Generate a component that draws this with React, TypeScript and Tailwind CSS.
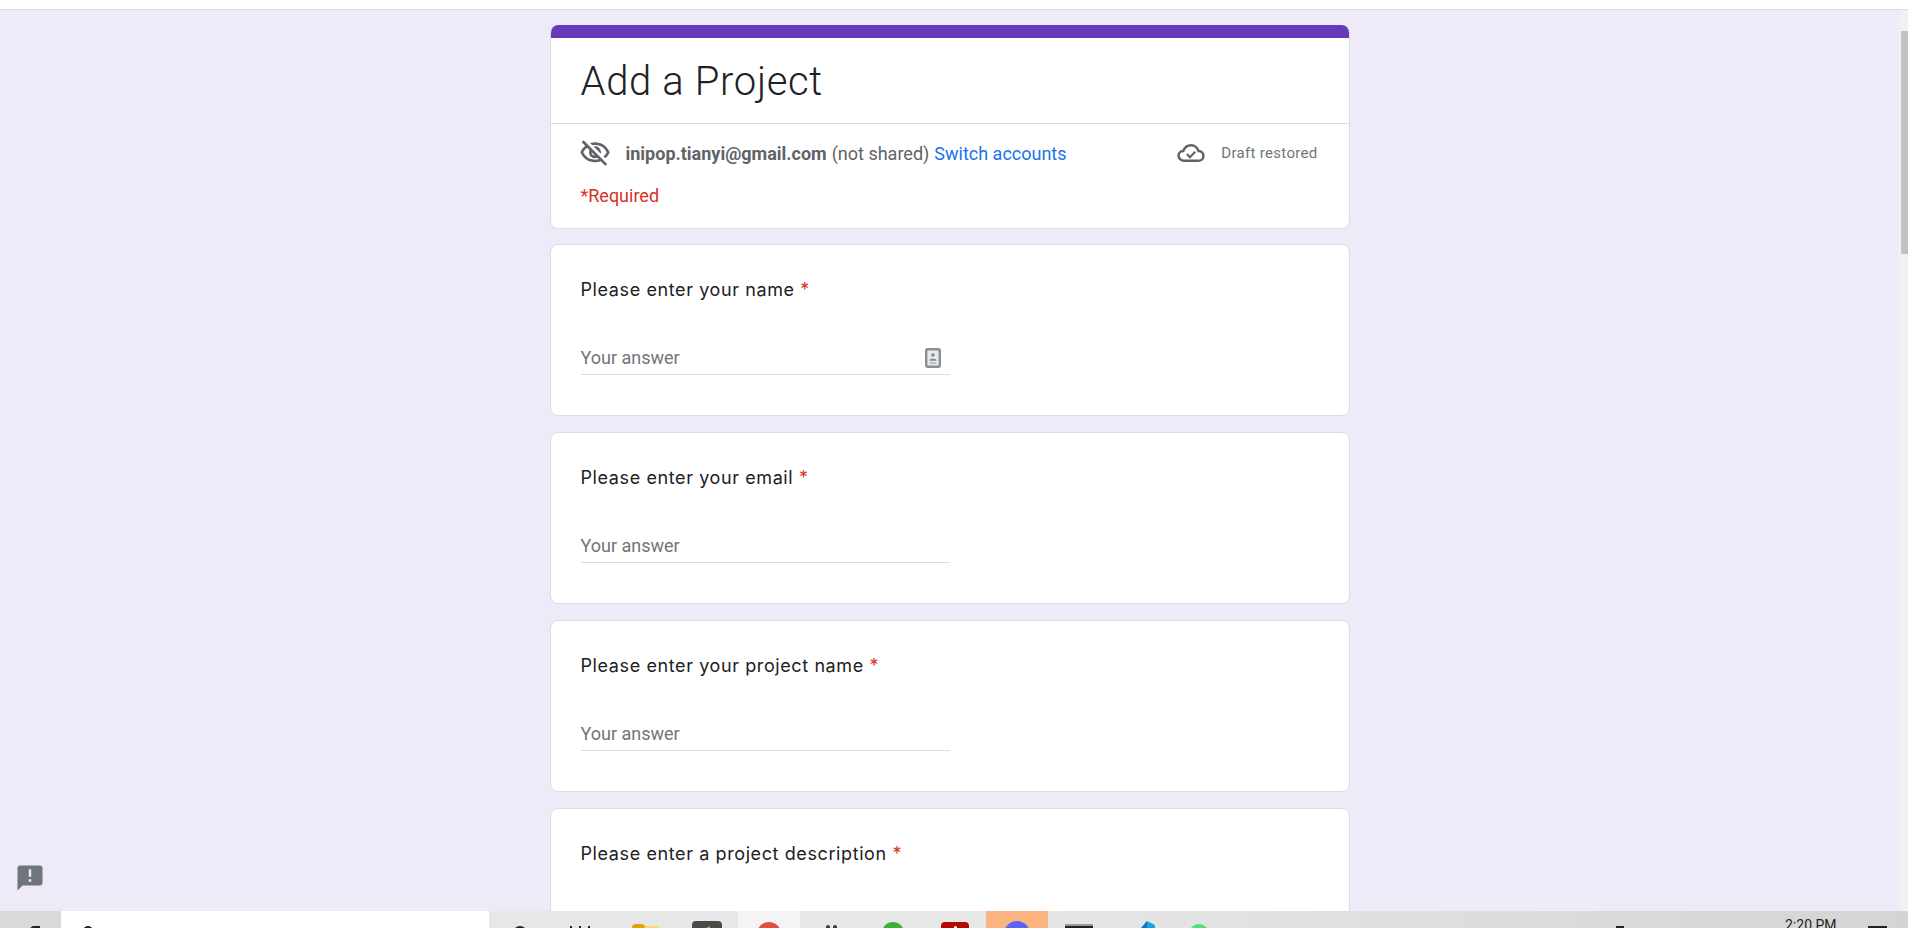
import { MdOutlineVisibilityOff, MdAnnouncement } from "react-icons/md";

function QuestionCard({ label, field = true, contact = false }: { label: string; field?: boolean; contact?: boolean }) {
  return (
    <section className="h-[172px] shrink-0 rounded-lg border border-[#dadce0] bg-white pl-[30px] pt-[33px]">
      <h2 className="font-['Inter',sans-serif] text-[18px] leading-6 tracking-[0.6px] text-[#202124]">
        {label} <span className="text-[#d93025]">*</span>
      </h2>
      {field && (
        <div className="mt-[37px] flex h-[36px] w-[369px] items-center justify-between border-b border-[#dadce0]">
          <span className="mt-[2px] font-['Roboto',sans-serif] text-[18px] text-[#70757a]">Your answer</span>
          {contact && (
            <svg width="16" height="20" viewBox="0 0 16 20" className="mr-[9px] mt-[2px]">
              <rect x="1.2" y="1.2" width="13.6" height="17.6" rx="1.5" fill="#e8eaed" stroke="#8a8e92" strokeWidth="2.4" />
              <circle cx="8" cy="7" r="1.7" fill="#80868b" />
              <path d="M4.5 12.2c0-2 7-2 7 0v.6h-7z" fill="#80868b" />
              <rect x="4.5" y="14" width="7" height="2" fill="#bdc1c6" />
            </svg>
          )}
        </div>
      )}
    </section>
  );
}

function TaskIcon({ children, bg = "" }: { children: React.ReactNode; bg?: string }) {
  return <div className={`flex h-[17px] w-[62px] shrink-0 justify-center overflow-hidden ${bg}`}>{children}</div>;
}

export default function App() {
  return (
    <div className="flex h-[928px] w-[1908px] flex-col overflow-hidden bg-white font-['Roboto',sans-serif]">
      <div className="h-[10px] shrink-0 border-b border-[#dadce0] bg-white" />
      <div className="relative flex min-h-0 flex-1">
        <main className="flex min-w-0 flex-1 flex-col gap-[15px] overflow-hidden bg-[#eeeaf8] pt-[15px]">
          <section className="mx-auto w-[800px] shrink-0 overflow-hidden rounded-lg border border-t-0 border-[#dadce0] bg-white">
            <div className="h-[13px] bg-[#673ab7]" />
            <h1 className="h-[85px] pl-[30px] pt-[20px] font-['Roboto',sans-serif] text-[40px] font-light leading-[48px] tracking-[0.65px] text-[#202124]">
              Add a Project
            </h1>
            <div className="h-[105px] border-t border-[#dadce0] pl-[30px] pr-[31px]">
              <div className="flex h-[58px] items-center text-[18px] text-[#5f6368]">
                <MdOutlineVisibilityOff className="-ml-[2px] text-[32px] text-[#5f6368]" />
                <b className="ml-[15px] font-bold">inipop.tianyi@gmail.com</b>
                <span className="ml-[5px]">(not shared)</span>
                <span className="ml-[5px] text-[#1a73e8]">Switch accounts</span>
                <div className="ml-auto flex items-center">
                  <svg width="28" height="20" viewBox="0 0 27 18" fill="none">
                    <path
                      d="M7 16.5C3.5 16.5 1.5 14 1.5 11.5C1.5 8.5 4 7 6 7C7.5 3.5 10.5 1.5 13.5 1.5C17.5 1.5 20 4.5 20.7 7C23.5 7 25.5 9.3 25.5 11.8C25.5 14.5 23.5 16.5 20.5 16.5Z"
                      stroke="#5f6368"
                      strokeWidth="2.4"
                    />
                    <path d="M9.5 10l3 3 5-5.2" stroke="#5f6368" strokeWidth="2" />
                  </svg>
                  <span className="ml-[16px] text-[15px] tracking-[0.3px] text-[#70757a]">Draft restored</span>
                </div>
              </div>
              <p className="mt-[2px] text-[18px] leading-6 text-[#d93025]">*Required</p>
            </div>
          </section>
          <div className="mx-auto flex w-[800px] flex-col gap-[16px]">
            <QuestionCard label="Please enter your name" contact />
            <QuestionCard label="Please enter your email" />
            <QuestionCard label="Please enter your project name" />
            <QuestionCard label="Please enter a project description" field={false} />
          </div>
        </main>
        <aside className="flex w-[9px] shrink-0 flex-col bg-[#f1f1f1] pt-[21px]">
          <div className="ml-[2px] h-[223px] bg-[#c1c1c1]" />
        </aside>
        <MdAnnouncement className="absolute bottom-[18px] left-[15px] text-[30px] text-[#70757a]" />
      </div>
      <footer className="flex h-[17px] shrink-0 overflow-hidden bg-gradient-to-r from-[#e6e6e6] via-[#e8e8e8] to-[#d4d4d4]">
        <div className="w-[61px] shrink-0 bg-[#d9d9d9] pl-[27px] pt-[15px]">
          <svg width="13" height="2" viewBox="0 0 13 2">
            <path d="M3 2 6 0h7v2z" fill="#222" />
          </svg>
        </div>
        <div className="w-[428px] shrink-0 bg-white pl-[22px] pt-[15px]">
          <div className="h-[10px] w-[10px] rounded-full border-2 border-[#222]" />
        </div>
        <div className="flex w-[125px] shrink-0 pl-[24px] pt-[15px]">
          <div className="h-[14px] w-[14px] rounded-full border-2 border-[#222]" />
          <div className="ml-[43px] flex gap-[7px]">
            <div className="h-[5px] w-[2px] bg-[#222]" />
            <div className="h-[5px] w-[2px] bg-[#222]" />
            <div className="h-[5px] w-[2px] bg-[#222]" />
          </div>
        </div>
        <TaskIcon>
          <div className="mt-[13px] flex">
            <div className="h-[12px] w-[13px] rounded-t-sm bg-[#e2a400]" />
            <div className="mt-[2px] h-[10px] w-[14px] bg-[#fdd868]" />
          </div>
        </TaskIcon>
        <TaskIcon>
          <div className="mt-[10px] flex h-[20px] w-[30px] justify-center rounded-sm bg-[#4a4a4a] pt-[5px]">
            <svg width="6" height="3" viewBox="0 0 6 3">
              <path d="M0 3 6 0v3z" fill="#f0932b" />
            </svg>
          </div>
        </TaskIcon>
        <TaskIcon bg="bg-[#f4f4f4]">
          <div className="mt-[11px] h-[24px] w-[24px] rounded-full bg-[#df4f43]" />
        </TaskIcon>
        <TaskIcon>
          <div className="mt-[14px] flex gap-[3px]">
            <div className="h-[6px] w-[4px] rounded-t-sm bg-[#3c3c3c]" />
            <div className="h-[6px] w-[4px] rounded-t-sm bg-[#3c3c3c]" />
          </div>
        </TaskIcon>
        <TaskIcon>
          <div className="mt-[11px] h-[24px] w-[22px] rounded-full bg-[#3fae3a]" />
        </TaskIcon>
        <TaskIcon>
          <div className="mt-[11px] flex h-[24px] w-[28px] justify-center rounded bg-[#b30b00] pt-[4px]">
            <div className="h-[4px] w-[3px] rounded-full bg-white" />
          </div>
        </TaskIcon>
        <TaskIcon bg="bg-[#fbb37f]">
          <div className="mt-[10px] h-[26px] w-[26px] rounded-full bg-[#5865f2]" />
        </TaskIcon>
        <TaskIcon>
          <div className="mt-[13px] h-[10px] w-[28px] border-t-2 border-[#999] bg-[#222]" />
        </TaskIcon>
        <TaskIcon>
          <svg width="18" height="20" viewBox="0 0 18 20" className="ml-[10px] mt-[10px]">
            <path d="M10 0 0 12v8h18V4z" fill="#1ba1e2" />
            <path d="M0 12 10 0v20H0z" fill="#0a78c2" />
          </svg>
        </TaskIcon>
        <TaskIcon>
          <div className="mr-[8px] mt-[13px] h-[20px] w-[20px] rounded-full bg-[#4be07d]" />
        </TaskIcon>
        <div className="flex min-w-0 flex-1">
          <div className="ml-[382px] mt-[15px] h-[4px] w-[8px] bg-[#222]" />
          <span className="ml-[161px] mt-[6px] text-[14px] leading-[16px] whitespace-nowrap text-[#222]">2:20 PM</span>
          <div className="ml-[31px] mt-[15px] h-[4px] w-[19px] bg-[#222]" />
        </div>
      </footer>
    </div>
  );
}
